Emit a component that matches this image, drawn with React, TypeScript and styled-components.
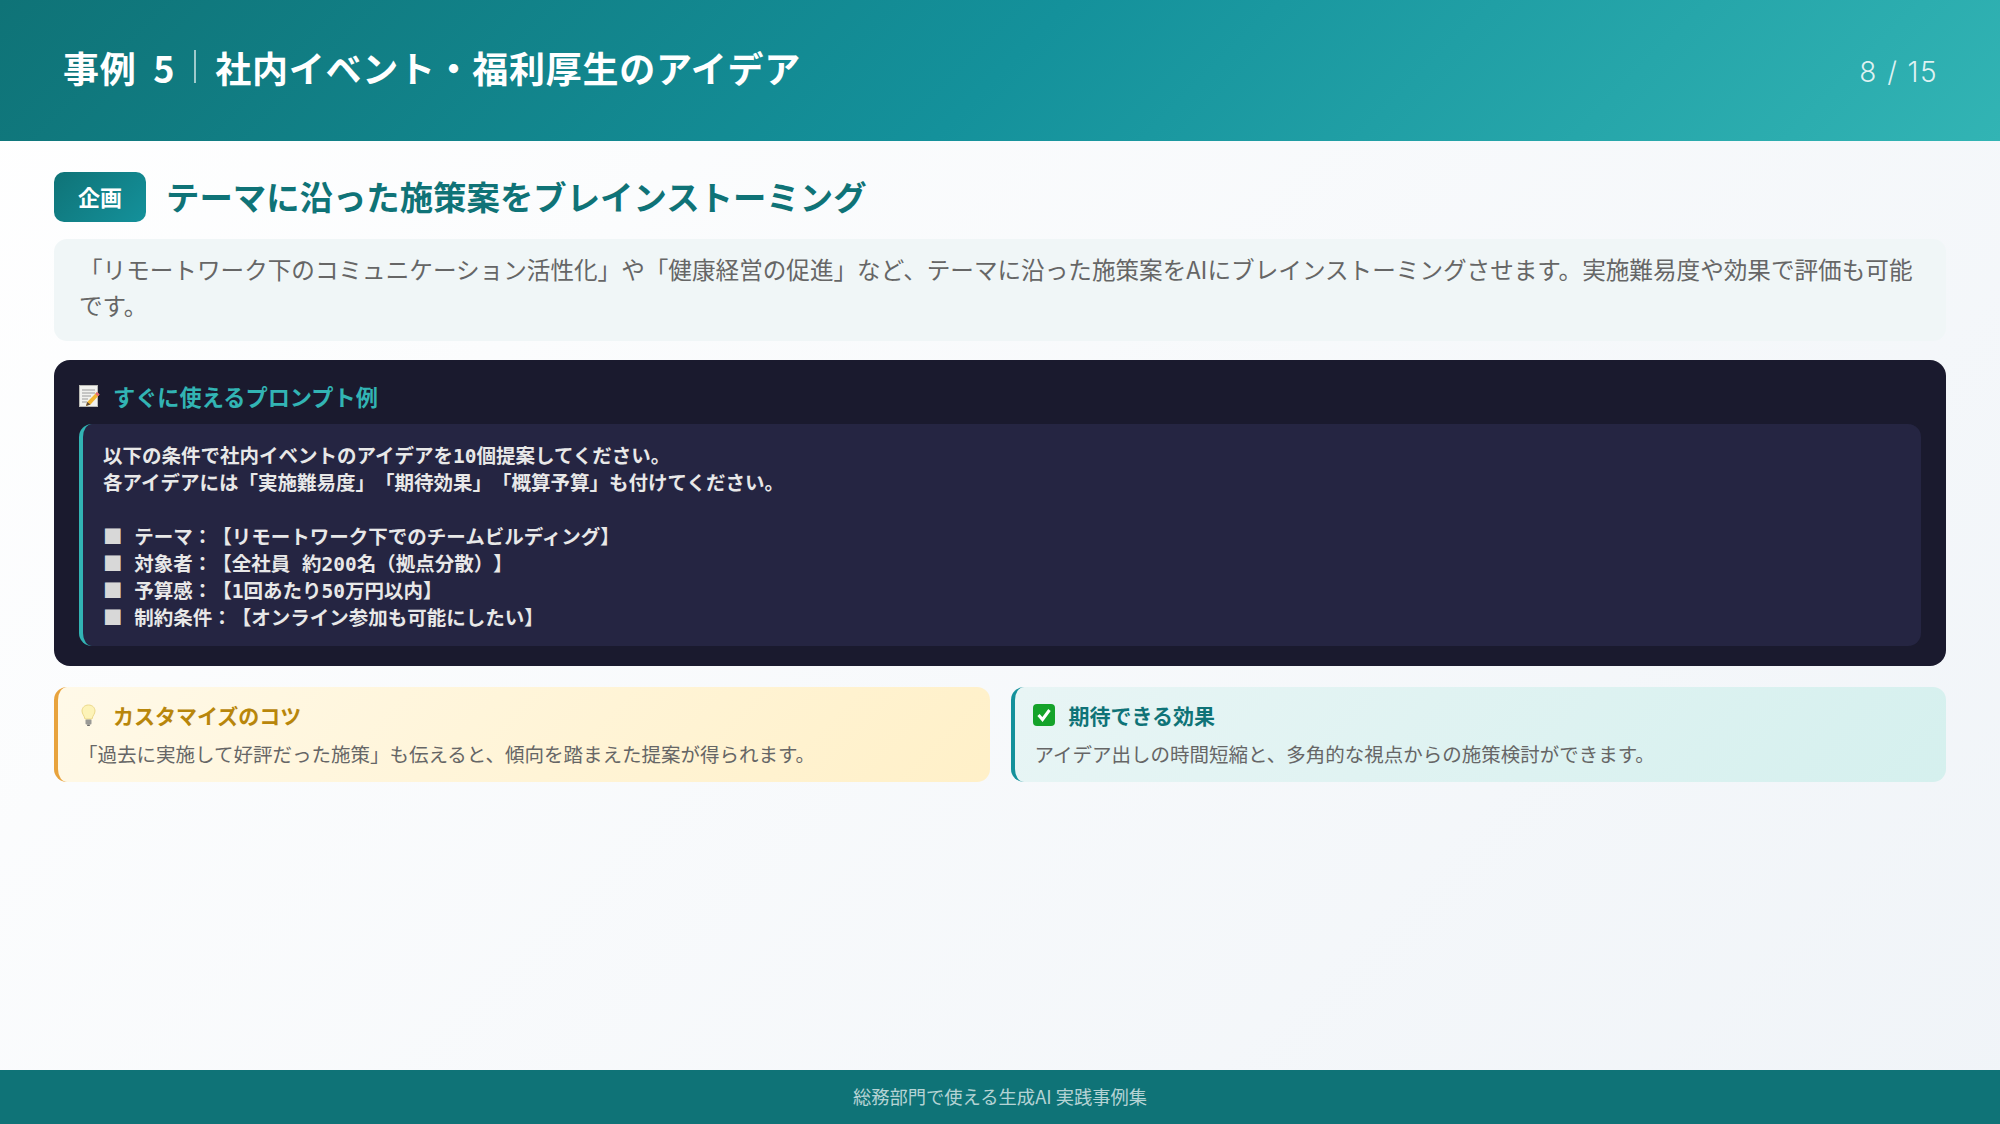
import React from "react";
import styled, { createGlobalStyle } from "styled-components";

const GlobalStyle = createGlobalStyle`
  html, body {
    margin: 0;
    padding: 0;
  }
  body {
    font-family: "Noto Sans CJK JP", "Noto Sans", sans-serif;
    text-spacing-trim: space-all;
  }
`;

const Slide = styled.div`
  width: 2000px;
  height: 1124px;
  display: flex;
  flex-direction: column;
  overflow: hidden;
  background: linear-gradient(135deg, #ffffff 0%, #f0f4f8 100%);
`;

const Header = styled.header`
  height: 141px;
  flex: none;
  box-sizing: border-box;
  padding: 0 62px 0 63px;
  display: flex;
  align-items: center;
  justify-content: space-between;
  background: linear-gradient(135deg, #0f7377 0%, #14919b 50%, #32b4b4 100%);
  color: #fff;
`;

const Title = styled.h1`
  margin: 0 0 8px;
  display: flex;
  align-items: center;
  font-size: 36px;
  font-weight: 700;
  line-height: 1.5;
  letter-spacing: 0.72px;
  word-spacing: 8px;
`;

const TitleSep = styled.span`
  width: 2px;
  height: 33px;
  margin: 0 19px 0 19px;
  background: rgba(255, 255, 255, 0.6);
`;

const PageNo = styled.div`
  font-family: "Inter", sans-serif;
  font-size: 28px;
  font-weight: 300;
  letter-spacing: 1.4px;
  color: rgba(255, 255, 255, 0.85);
  margin-top: 2px;
`;

const Main = styled.main`
  flex: 1;
  box-sizing: border-box;
  padding: 31px 54px 0;
  display: flex;
  flex-direction: column;
`;

const Heading = styled.div`
  display: flex;
  align-items: center;
  gap: 20px;
  margin-bottom: 17px;
`;

const Badge = styled.span`
  width: 92px;
  height: 50px;
  padding-bottom: 2px;
  box-sizing: border-box;
  display: flex;
  align-items: center;
  justify-content: center;
  border-radius: 10px;
  background: linear-gradient(135deg, #0f7377 0%, #14919b 100%);
  color: #fff;
  font-size: 22px;
  font-weight: 700;
`;

const HeadingText = styled.h2`
  margin: 0 0 2px;
  font-size: 33.4px;
  font-weight: 700;
  line-height: 48px;
  color: #0f7377;
`;

const Description = styled.p`
  margin: 0 0 19px;
  padding: 12px 26px 18px 25px;
  border-radius: 13px;
  background: #f0f6f7;
  color: #666;
  font-size: 23.6px;
  line-height: 36px;
`;

const PromptPanel = styled.section`
  box-sizing: border-box;
  height: 306px;
  padding: 21px 25px 20px;
  border-radius: 16px;
  background: #1a1a2e;
  margin-bottom: 21px;
`;

const PromptTitle = styled.div`
  height: 43px;
  padding-bottom: 13px;
  box-sizing: border-box;
  display: flex;
  align-items: center;
  gap: 13px;
  color: #32b4b4;
  font-size: 22.2px;
  font-weight: 700;
`;

const PromptBody = styled.pre`
  margin: 0;
  height: 222px;
  box-sizing: border-box;
  padding: 19px 20px 17px;
  border-left: 4px solid #32b4b4;
  border-radius: 13px;
  background: #252542;
  color: #e8e8e8;
  font-family: "DejaVu Sans Mono", "Noto Sans CJK JP", monospace;
  font-size: 19.5px;
  font-weight: 700;
  line-height: 27px;
`;

const Bullet = styled.span`
  font-family: "Noto Sans CJK JP", sans-serif;
  font-weight: 400;
  line-height: 0;
  color: #d8d8d8;
`;

const Cards = styled.div`
  display: grid;
  grid-template-columns: 1fr 1fr;
  gap: 21px;
`;

const Card = styled.div<{ $tone: "tip" | "effect" }>`
  box-sizing: border-box;
  height: 95px;
  padding: 12px 20px;
  border-left: 4px solid ${(p) => (p.$tone === "tip" ? "#e8a33d" : "#14919b")};
  border-radius: 13px;
  background: ${(p) =>
    p.$tone === "tip"
      ? "linear-gradient(135deg, #fff9e8 0%, #fff0c8 100%)"
      : "linear-gradient(135deg, #e8f5f5 0%, #d5f0ee 100%)"};
`;

const CardTitle = styled.div<{ $tone: "tip" | "effect" }>`
  height: 32px;
  display: flex;
  align-items: center;
  gap: 14px;
  font-size: 21px;
  font-weight: 700;
  color: ${(p) => (p.$tone === "tip" ? "#b8860b" : "#0f7377")};
`;

const CardText = styled.p`
  margin: 8px 0 0;
  color: #666;
  font-size: 19.5px;
  line-height: 29px;
`;

const Footer = styled.footer`
  height: 54px;
  flex: none;
  padding-bottom: 2px;
  box-sizing: border-box;
  display: flex;
  align-items: center;
  justify-content: center;
  background: #0f7377;
  color: rgba(255, 255, 255, 0.7);
  font-size: 18.3px;
`;

const CheckSvg = styled.svg`
  margin-left: -2px;
`;

const MemoIcon = () => (
  <svg width="21" height="23" viewBox="0 0 21 23">
    <rect x="0.5" y="0.5" width="18" height="21" fill="#f1f1ee" stroke="#b9b9b4" />
    <path d="M3 5h13M3 8h13M3 11h9M3 14h6M3 17h5" stroke="#9a9a9a" strokeWidth="1" />
    <path d="M18 7l2.5 2.5-9 10L7 21l1.2-4z" fill="#f2b632" />
    <path d="M18 7l2.5 2.5-1.6 1.7-2.5-2.5z" fill="#e0667a" />
    <path d="M8.2 17L7 21l4.5-1.5z" fill="#5d4a3a" />
  </svg>
);

const BulbIcon = () => (
  <svg width="21" height="23" viewBox="0 0 21 23">
    <path
      d="M10.5 1C6.5 1 4 3.8 4 7c0 3 2.400 4.500 3 8h7c.6-3.500 3-5 3-8 0-3.200-2.500-6-6.500-6z"
      fill="#fdf3b8"
      stroke="#ecd98a"
      strokeWidth="1"
    />
    <rect x="7.500" y="15.500" width="6" height="5" rx="1" fill="#9a9a96" />
    <rect x="9" y="20.500" width="3" height="1.500" rx="0.700" fill="#6c6c6c" />
  </svg>
);

const CheckIcon = () => (
  <CheckSvg width="22" height="22" viewBox="0 0 22 22">
    <rect width="22" height="22" rx="4" fill="#15a32a" />
    <path d="M5.500 11l4 4.500 7-9.500" fill="none" stroke="#fff" strokeWidth="3" />
  </CheckSvg>
);

const promptIntro = `以下の条件で社内イベントのアイデアを10個提案してください。
各アイデアには「実施難易度」「期待効果」「概算予算」も付けてください。

`;

const promptItems = [
  "テーマ：【リモートワーク下でのチームビルディング】",
  "対象者：【全社員 約200名（拠点分散）】",
  "予算感：【1回あたり50万円以内】",
  "制約条件：【オンライン参加も可能にしたい】",
];

export default function App() {
  return (
    <Slide>
      <GlobalStyle />
      <Header>
        <Title>
          事例 5<TitleSep />
          社内イベント・福利厚生のアイデア
        </Title>
        <PageNo>8 / 15</PageNo>
      </Header>
      <Main>
        <Heading>
          <Badge>企画</Badge>
          <HeadingText>テーマに沿った施策案をブレインストーミング</HeadingText>
        </Heading>
        <Description>
          「リモートワーク下のコミュニケーション活性化」や「健康経営の促進」など、テーマに沿った施策案をAIにブレインストーミングさせます。実施難易度や効果で評価も可能です。
        </Description>
        <PromptPanel>
          <PromptTitle>
            <MemoIcon />
            すぐに使えるプロンプト例
          </PromptTitle>
          <PromptBody>
            {promptIntro}
            {promptItems.map((item, i) => (
              <React.Fragment key={item}>
                <Bullet>■</Bullet> {item}
                {i < promptItems.length - 1 ? "\n" : ""}
              </React.Fragment>
            ))}
          </PromptBody>
        </PromptPanel>
        <Cards>
          <Card $tone="tip">
            <CardTitle $tone="tip">
              <BulbIcon />
              カスタマイズのコツ
            </CardTitle>
            <CardText>「過去に実施して好評だった施策」も伝えると、傾向を踏まえた提案が得られます。</CardText>
          </Card>
          <Card $tone="effect">
            <CardTitle $tone="effect">
              <CheckIcon />
              期待できる効果
            </CardTitle>
            <CardText>アイデア出しの時間短縮と、多角的な視点からの施策検討ができます。</CardText>
          </Card>
        </Cards>
      </Main>
      <Footer>総務部門で使える生成AI 実践事例集</Footer>
    </Slide>
  );
}
